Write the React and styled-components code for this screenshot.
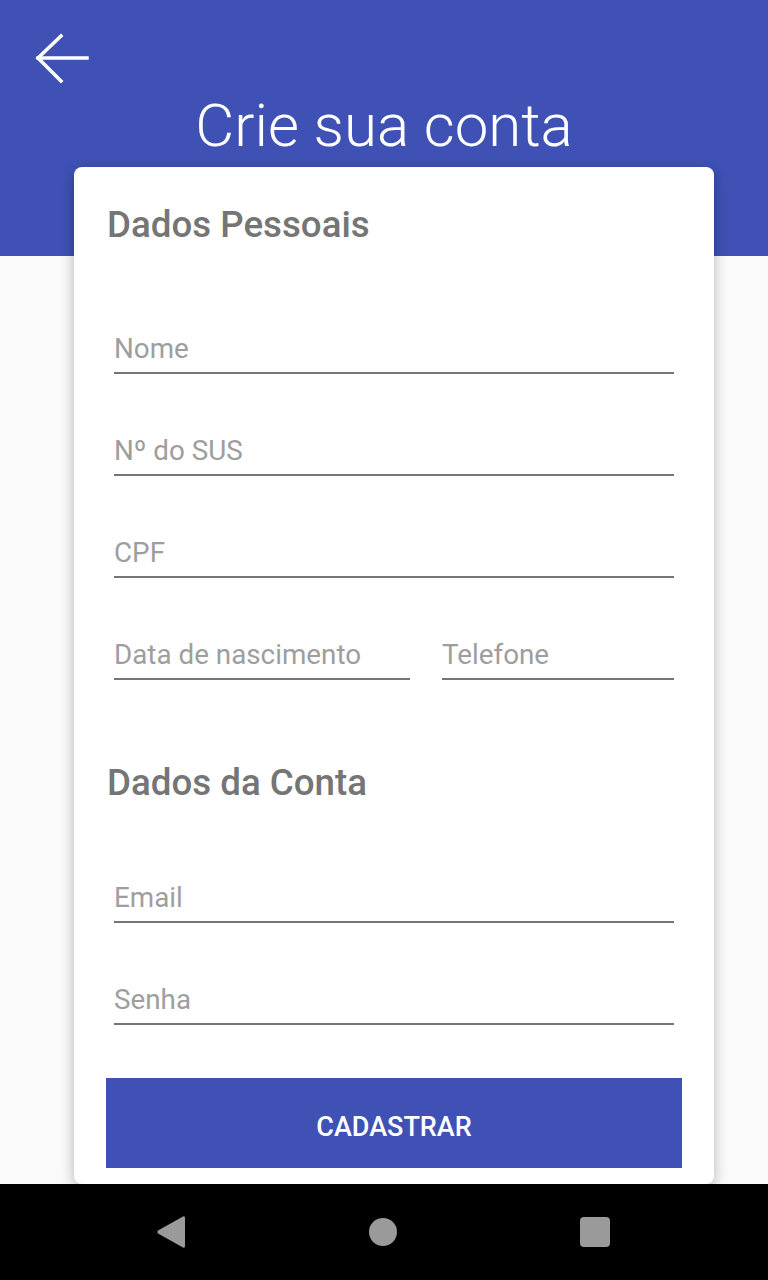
import styled, { createGlobalStyle } from "styled-components";

const GlobalStyle = createGlobalStyle`
  * { box-sizing: border-box; }
  html, body { margin: 0; padding: 0; }
  body {
    font-family: Roboto, "Noto Sans", "Liberation Sans", sans-serif;
    background: #fafafa;
  }
`;

const Screen = styled.div`
  height: 1280px;
  display: flex;
  flex-direction: column;
`;

const Content = styled.main`
  flex: 1;
  overflow: hidden;
  background: linear-gradient(#3f51b5 0 256px, #fafafa 256px);
  display: flex;
  flex-direction: column;
`;

const TopBar = styled.div`
  padding: 30px 0 0 32px;
  height: 86px;
`;

const BackButton = styled.button`
  border: 0;
  background: none;
  padding: 0;
  width: 60px;
  height: 56px;
  cursor: pointer;
  display: block;
`;

const Title = styled.h1`
  margin: 6px 0 0;
  text-align: center;
  color: #fff;
  font-weight: 300;
  font-size: 60px;
  line-height: 68px;
`;

const Card = styled.form`
  margin: 7px 54px 0 74px;
  background: #fff;
  border-radius: 8px;
  box-shadow: 0 4px 14px rgba(0, 0, 0, 0.28);
  padding: 38px 32px 16px;
  display: flex;
  flex-direction: column;
`;

const SectionTitle = styled.h2`
  margin: ${(p) => (p.$second ? "83px 0 18px 1px" : "0 0 27px 1px")};
  color: #757575;
  font-weight: 500;
  font-size: 36.7px;
  line-height: 40px;
`;

const Row = styled.div`
  display: flex;
  gap: 32px;
  padding: 0 8px;
  margin-top: 61px;
`;

const Field = styled.div`
  flex: ${(p) => p.$grow || 1};
  min-width: 0;
`;

const Input = styled.input`
  width: 100%;
  border: 0;
  border-bottom: 2px solid #757575;
  border-radius: 0;
  outline: none;
  background: transparent;
  padding: 0 0 9px;
  height: 41px;
  font-family: Roboto, "Noto Sans", sans-serif;
  font-size: 27.8px;
  line-height: 30px;
  color: #333;

  &::placeholder {
    color: #9e9e9e;
  }
`;

const SubmitButton = styled.button`
  margin-top: 53px;
  height: 90px;
  padding: 8px 0 0;
  border: 0;
  background: #3f51b5;
  color: #fff;
  font-family: Roboto, "Noto Sans", sans-serif;
  font-weight: 500;
  font-size: 27px;
  text-transform: uppercase;
  cursor: pointer;
`;

const NavBar = styled.nav`
  height: 96px;
  background: #000;
  display: flex;
  align-items: center;
  justify-content: space-between;
  padding: 0 158px 0 156px;
`;

const NavIcon = styled.svg`
  display: block;
  fill: #9a9a9a;
`;

const ArrowIcon = () => (
  <svg width="60" height="56" viewBox="0 0 60 56" fill="none" stroke="#fff" strokeWidth="3.5" strokeLinecap="square">
    <path d="M6 28H55" />
    <path d="M29 6L6 28L29 51" />
  </svg>
);

const TextField = ({ placeholder, grow, type = "text" }) => (
  <Field $grow={grow}>
    <Input type={type} placeholder={placeholder} />
  </Field>
);

const App = () => {
  const submitHandler = (e) => {
    e.preventDefault();
  };

  return (
    <>
      <GlobalStyle />
      <Screen>
        <Content>
          <TopBar>
            <BackButton type="button" aria-label="Voltar">
              <ArrowIcon />
            </BackButton>
          </TopBar>
          <Title>Crie sua conta</Title>

          <Card onSubmit={submitHandler}>
            <SectionTitle>Dados Pessoais</SectionTitle>
            <Row>
              <TextField placeholder="Nome" />
            </Row>
            <Row>
              <TextField placeholder="Nº do SUS" />
            </Row>
            <Row>
              <TextField placeholder="CPF" />
            </Row>
            <Row>
              <TextField placeholder="Data de nascimento" grow={37} />
              <TextField placeholder="Telefone" grow={29} />
            </Row>

            <SectionTitle $second>Dados da Conta</SectionTitle>
            <Row>
              <TextField placeholder="Email" type="email" />
            </Row>
            <Row>
              <TextField placeholder="Senha" type="password" />
            </Row>

            <SubmitButton type="submit">Cadastrar</SubmitButton>
          </Card>
        </Content>

        <NavBar>
          <NavIcon width="30" height="34" viewBox="0 0 30 34">
            <path d="M27 1.5Q29 0.5 29 3V31Q29 33.5 27 32.5L2 18.5Q0.5 17 2 15.5Z" />
          </NavIcon>
          <NavIcon width="28" height="28" viewBox="0 0 28 28">
            <circle cx="14" cy="14" r="14" />
          </NavIcon>
          <NavIcon width="30" height="30" viewBox="0 0 30 30">
            <rect width="30" height="30" rx="4" />
          </NavIcon>
        </NavBar>
      </Screen>
    </>
  );
};

export default App;
